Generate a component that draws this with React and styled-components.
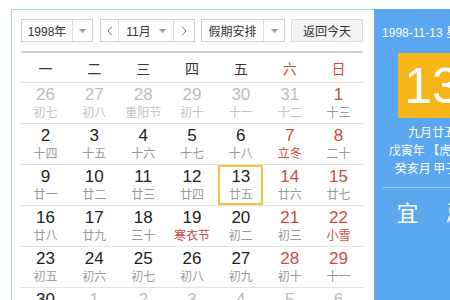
import React from "react";
import styled, { createGlobalStyle } from "styled-components";

const GlobalStyle = createGlobalStyle`
  body {
    margin: 0;
    overflow: hidden;
    background: #fff;
    font-family: "Liberation Sans", "Noto Sans CJK SC", sans-serif;
  }
`;

const Page = styled.div`
  display: flex;
  padding: 9px 0 0 11px;
  width: 600px;
`;

const LeftPanel = styled.div`
  width: 342px;
  padding: 9px 11px 0 9px;
  border-top: 1px solid #a9d4df;
  border-left: 1px solid #a9d4df;
`;

const Toolbar = styled.div`
  display: flex;
  align-items: center;
  height: 23px;
`;

const Select = styled.div`
  display: flex;
  height: 23px;
  box-sizing: border-box;
  border: 1px solid #d0d0d0;
  background: #fff;
  margin-right: ${(p) => p.$gap || 0}px;
`;

const Seg = styled.div`
  display: flex;
  align-items: center;
  justify-content: center;
  gap: 8px;
  width: ${(p) => p.$w}px;
  font-size: 12px;
  color: #333;
  border-left: ${(p) => (p.$divider ? "1px solid #ddd" : "none")};
`;

const ReturnButton = styled.div`
  margin-left: auto;
  width: 72px;
  height: 23px;
  box-sizing: border-box;
  border: 1px solid #ddd;
  background: #f4f4f4;
  display: flex;
  align-items: center;
  justify-content: center;
  font-size: 12px;
  color: #333;
`;

const Rule = styled.div`
  height: 2px;
  background: #d2d2d2;
  margin-top: 9px;
`;

const WeekHeader = styled.div`
  display: grid;
  grid-template-columns: repeat(7, 1fr);
  height: 29px;
  align-items: center;
  border-bottom: 1px solid #e2e2e2;
`;

const WeekDay = styled.div`
  text-align: center;
  font-size: 14px;
  color: ${(p) => (p.$weekend ? "#c84c46" : "#333")};
`;

const Week = styled.div`
  display: grid;
  grid-template-columns: repeat(7, 1fr);
  height: 40px;
  border-bottom: 1px solid #e2e2e2;
`;

const Cell = styled.div`
  margin: 0 2px;
  padding-top: 1px;
  border: 2px solid ${(p) => (p.$selected ? "#f2c440" : "transparent")};
  text-align: center;
`;

const Num = styled.div`
  font-size: 17px;
  line-height: 18px;
  color: ${(p) => (p.$other ? "#bdbdbd" : p.$weekend ? "#c84c46" : "#222")};
`;

const Lunar = styled.div`
  font-size: 12px;
  line-height: 16px;
  font-family: "Noto Sans CJK SC", sans-serif;
  color: ${(p) => (p.$other ? "#c4c4c4" : p.$festival ? "#c84c46" : "#999")};
`;

const SidePanel = styled.div`
  box-sizing: border-box;
  width: 116px;
  background: #5aa6ef;
  display: flex;
  flex-direction: column;
  align-items: center;
  padding: 16px 9px 0;
  color: #fff;
  font-family: "Noto Sans CJK SC", sans-serif;
`;

const DateLine = styled.div`
  font-size: 12px;
  line-height: 16px;
  white-space: nowrap;
  font-family: "Liberation Sans", "Noto Sans CJK SC", sans-serif;
`;

const DayBox = styled.div`
  margin-top: 12px;
  width: 68px;
  height: 65px;
  flex-shrink: 0;
  background: #f6b617;
  display: flex;
  align-items: center;
  justify-content: center;
  font-family: "Liberation Sans", sans-serif;
  font-size: 50px;
  color: #fff;
`;

const InfoLine = styled.div`
  font-size: 12px;
  line-height: 18px;
  white-space: nowrap;
  margin-top: ${(p) => p.$top || 0}px;
`;

const PanelRule = styled.div`
  align-self: stretch;
  height: 1px;
  background: rgba(255, 255, 255, 0.45);
  margin-top: 10px;
`;

const YiJi = styled.div`
  display: flex;
  gap: 27px;
  margin-top: 12px;
  font-size: 22px;
  line-height: 22px;
`;

const Caret = () => (
  <svg width="7" height="4" viewBox="0 0 7 4">
    <path d="M0 0h7L3.5 4z" fill="#999" />
  </svg>
);

const Chevron = ({ dir }) => (
  <svg width="6" height="10" viewBox="0 0 6 10">
    <path
      d={dir === "left" ? "M5 0.5L1 5l4 4.5" : "M1 0.5L5 5l-4 4.5"}
      fill="none"
      stroke="#777"
      strokeWidth="1"
    />
  </svg>
);

const weekdays = ["一", "二", "三", "四", "五", "六", "日"];

// [day, lunar, other month, festival]
const weeks = [
  [[26, "初七", 1], [27, "初八", 1], [28, "重阳节", 1], [29, "初十", 1], [30, "十一", 1], [31, "十二", 1], [1, "十三"]],
  [[2, "十四"], [3, "十五"], [4, "十六"], [5, "十七"], [6, "十八"], [7, "立冬", 0, 1], [8, "二十"]],
  [[9, "廿一"], [10, "廿二"], [11, "廿三"], [12, "廿四"], [13, "廿五"], [14, "廿六"], [15, "廿七"]],
  [[16, "廿八"], [17, "廿九"], [18, "三十"], [19, "寒衣节", 0, 1], [20, "初二"], [21, "初三"], [22, "小雪", 0, 1]],
  [[23, "初五"], [24, "初六"], [25, "初七"], [26, "初八"], [27, "初九"], [28, "初十"], [29, "十一"]],
  [[30, "十二"], [1, "十三", 1], [2, "十四", 1], [3, "十五", 1], [4, "十六", 1], [5, "十七", 1], [6, "十八", 1]],
];

export default function App() {
  return (
    <>
      <GlobalStyle />
      <Page>
        <LeftPanel>
          <Toolbar>
            <Select $gap={7}>
              <Seg $w={50}>1998年</Seg>
              <Seg $w={19} $divider>
                <Caret />
              </Seg>
            </Select>
            <Select $gap={6}>
              <Seg $w={17}>
                <Chevron dir="left" />
              </Seg>
              <Seg $w={54} $divider>
                11月 <Caret />
              </Seg>
              <Seg $w={20} $divider>
                <Chevron dir="right" />
              </Seg>
            </Select>
            <Select>
              <Seg $w={61}>假期安排</Seg>
              <Seg $w={20} $divider>
                <Caret />
              </Seg>
            </Select>
            <ReturnButton>返回今天</ReturnButton>
          </Toolbar>
          <Rule />
          <WeekHeader>
            {weekdays.map((w, i) => (
              <WeekDay key={w} $weekend={i >= 5}>
                {w}
              </WeekDay>
            ))}
          </WeekHeader>
          {weeks.map((week, wi) => (
            <Week key={wi}>
              {week.map(([day, lunar, other, festival], di) => (
                <Cell key={di} $selected={wi === 2 && di === 4}>
                  <Num $other={other} $weekend={di >= 5}>
                    {day}
                  </Num>
                  <Lunar $other={other} $festival={festival}>
                    {lunar}
                  </Lunar>
                </Cell>
              ))}
            </Week>
          ))}
        </LeftPanel>
        <SidePanel>
          <DateLine>1998-11-13 星期五</DateLine>
          <DayBox>13</DayBox>
          <InfoLine $top={5}>九月廿五</InfoLine>
          <InfoLine>戊寅年 【虎年】</InfoLine>
          <InfoLine>癸亥月 甲子日</InfoLine>
          <PanelRule />
          <YiJi>
            <span>宜</span>
            <span>忌</span>
          </YiJi>
        </SidePanel>
      </Page>
    </>
  );
}
